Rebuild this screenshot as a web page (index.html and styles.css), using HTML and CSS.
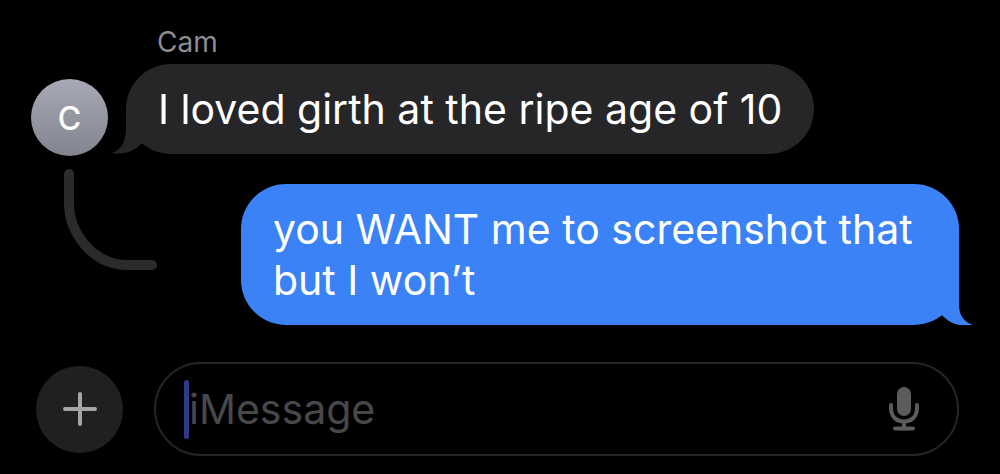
FILE: index.html
```html
<!DOCTYPE html>
<html lang="en">

<head>
  <meta charset="UTF-8">
  <meta name="viewport" content="width=device-width, initial-scale=1.0">
  <title>Messages</title>
  <link rel="stylesheet" href="styles.css">
</head>

<body>
  <main class="chat">
    <div class="side">
      <div class="avatar">C</div>
      <svg class="thread" viewBox="0 0 94 102" aria-hidden="true">
        <path d="M5 5V34C5 62 27 96 64 96H88" />
      </svg>
    </div>
    <div class="messages">
      <div class="sender">Cam</div>
      <div class="bubble incoming">
        I loved girth at the ripe age of 10
        <svg class="tail" viewBox="0 0 32 48" aria-hidden="true">
          <path d="M14 4V22C14 36 9 44 0 47C11 49 22 46 30 37L32 8Z" />
        </svg>
      </div>
      <div class="bubble outgoing">
        you WANT me to screenshot that but I won’t
        <svg class="tail" viewBox="0 0 32 48" aria-hidden="true">
          <path d="M18 0V28C18 38 23 45 32 48C18 50 8 46 1 38L0 8Z" />
        </svg>
      </div>
    </div>
  </main>

  <form class="composer">
    <button type="button" class="add" aria-label="Add">
      <svg viewBox="0 0 34 34" aria-hidden="true">
        <path d="M17 2V32M2 17H32" />
      </svg>
    </button>
    <div class="field">
      <span class="caret"></span>
      <input type="text" class="text" placeholder="iMessage" aria-label="iMessage">
      <button type="button" class="dictate" aria-label="Dictate">
        <svg viewBox="0 0 30 44" aria-hidden="true">
          <rect x="8" y="0" width="14" height="29" rx="7" />
          <path d="M2 18V21C2 29 7 34.500 15 34.500S28 29 28 21V18M15 34.500V41M6 41.500H24" />
        </svg>
      </button>
    </div>
  </form>
</body>

</html>
```
FILE: styles.css
```css
* {
  margin: 0;
  padding: 0;
  box-sizing: border-box;
}

body {
  background-color: #000;
  color: #fff;
  font-family: Inter, "Liberation Sans", sans-serif;
  font-size: 41px;
}

svg {
  display: block;
}

button {
  border: none;
  background: none;
  cursor: pointer;
}

.chat {
  display: flex;
  padding: 24px 41px 0 31px;
}

.side {
  display: flex;
  flex-direction: column;
  gap: 13px;
  flex: none;
  width: 95px;
  padding-top: 55px;
}

.avatar {
  width: 77px;
  height: 77px;
  border-radius: 50%;
  background: linear-gradient(#a7aab6, #82858e);
  font-size: 32px;
  font-weight: 500;
  line-height: 80px;
  text-align: center;
}

.thread {
  width: 94px;
  height: 102px;
  margin-left: 33px;
  fill: none;
  stroke: #2b2b2b;
  stroke-width: 10;
  stroke-linecap: round;
}

.messages {
  display: flex;
  flex-direction: column;
  flex: 1;
}

.sender {
  padding-left: 31px;
  margin-bottom: 4px;
  color: #8c8c91;
  font-size: 28px;
  line-height: 36px;
}

.bubble {
  position: relative;
  max-width: 718px;
  padding: 20px 32px 19px;
  border-radius: 45px;
  line-height: 51px;
}

.incoming {
  align-self: flex-start;
  background-color: #262628;
  fill: #262628;
}

.outgoing {
  align-self: flex-end;
  margin-top: 30px;
  background-color: #3b82f7;
  fill: #3b82f7;
}

.tail {
  position: absolute;
  bottom: 0;
  width: 32px;
  height: 48px;
}

.incoming .tail {
  left: -14px;
}

.outgoing .tail {
  right: -14px;
}

.composer {
  display: flex;
  align-items: center;
  gap: 31px;
  padding: 37px 41px 18px 36px;
}

.add {
  display: flex;
  align-items: center;
  justify-content: center;
  flex: none;
  width: 87px;
  height: 87px;
  border-radius: 50%;
  background-color: #202022;
}

.add svg {
  width: 34px;
  height: 34px;
  stroke: #a5a5a8;
  stroke-width: 4;
  stroke-linecap: round;
}

.field {
  display: flex;
  align-items: center;
  flex: 1;
  height: 94px;
  padding: 0 38px 0 28px;
  border: 2px solid #252526;
  border-radius: 47px;
}

.caret {
  flex: none;
  width: 5px;
  height: 59px;
  border-radius: 3px;
  background-color: #303a86;
}

.text {
  flex: 1;
  min-width: 0;
  border: none;
  outline: none;
  background: none;
  color: #fff;
  font: inherit;
}

.text::placeholder {
  color: #48484a;
  opacity: 1;
}

.dictate svg {
  width: 30px;
  height: 44px;
  fill: #5c5c5f;
}

.dictate path {
  fill: none;
  stroke: #5c5c5f;
  stroke-width: 4;
  stroke-linecap: round;
}
```
